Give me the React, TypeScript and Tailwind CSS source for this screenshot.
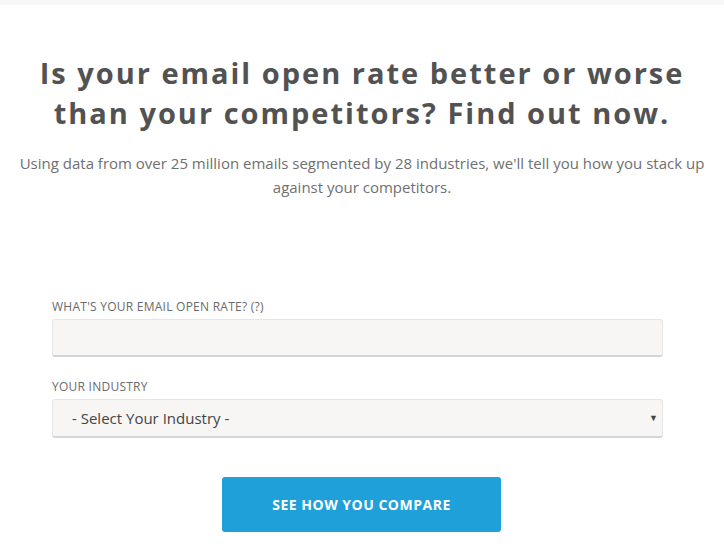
import React from "react";

export default function App() {
  return (
    <div className="min-h-[546px] w-[724px] bg-white" style={{ fontFamily: "'Open Sans', 'Liberation Sans', sans-serif" }}>
      <div className="h-[5px] bg-[#f7f7f7]" />
      <div className="flex flex-col items-center pt-[48px]">
        <h1 className="text-center text-[29px] font-bold leading-[40px] tracking-[2px] text-[#525252]">
          Is your email open rate better or worse
          <br />
          than your competitors? Find out now.
        </h1>
        <p className="mt-[18px] text-center text-[15px] leading-[24px] text-[#707070]">
          Using data from over 25 million emails segmented by 28 industries, we'll tell you how you stack up
          <br />
          against your competitors.
        </p>
      </div>
      <form className="mx-[52px] mt-[101px] w-[611px]">
        <label className="block text-[12px] uppercase leading-[14px] tracking-[0.25px] text-[#6a6a6a]">What's your email open rate? (?)</label>
        <div className="mt-[5px] h-[38px] rounded-[3px] border border-[#e6e6e6] border-b-2 border-b-[#d5d5d5] bg-[#f7f6f5]" />
        <label className="mt-[23px] block text-[12px] uppercase leading-[14px] tracking-[0.25px] text-[#6a6a6a]">Your industry</label>
        <div className="mt-[5px] flex h-[39px] items-center justify-between rounded-[3px] border border-[#e6e6e6] border-b-2 border-b-[#d5d5d5] bg-[#f7f6f5] pl-[19px] pr-[4px]">
          <span className="text-[15px] text-[#444444]">- Select Your Industry -</span>
          <span className="text-[9px] text-[#444444]">▼</span>
        </div>
        <div className="mt-[39px] flex justify-center pl-[8px]">
          <button type="button" className="h-[55px] w-[279px] rounded-[3px] bg-[#1fa0d9] text-[14px] font-bold tracking-[0.5px] text-white">
            SEE HOW YOU COMPARE
          </button>
        </div>
      </form>
    </div>
  );
}
